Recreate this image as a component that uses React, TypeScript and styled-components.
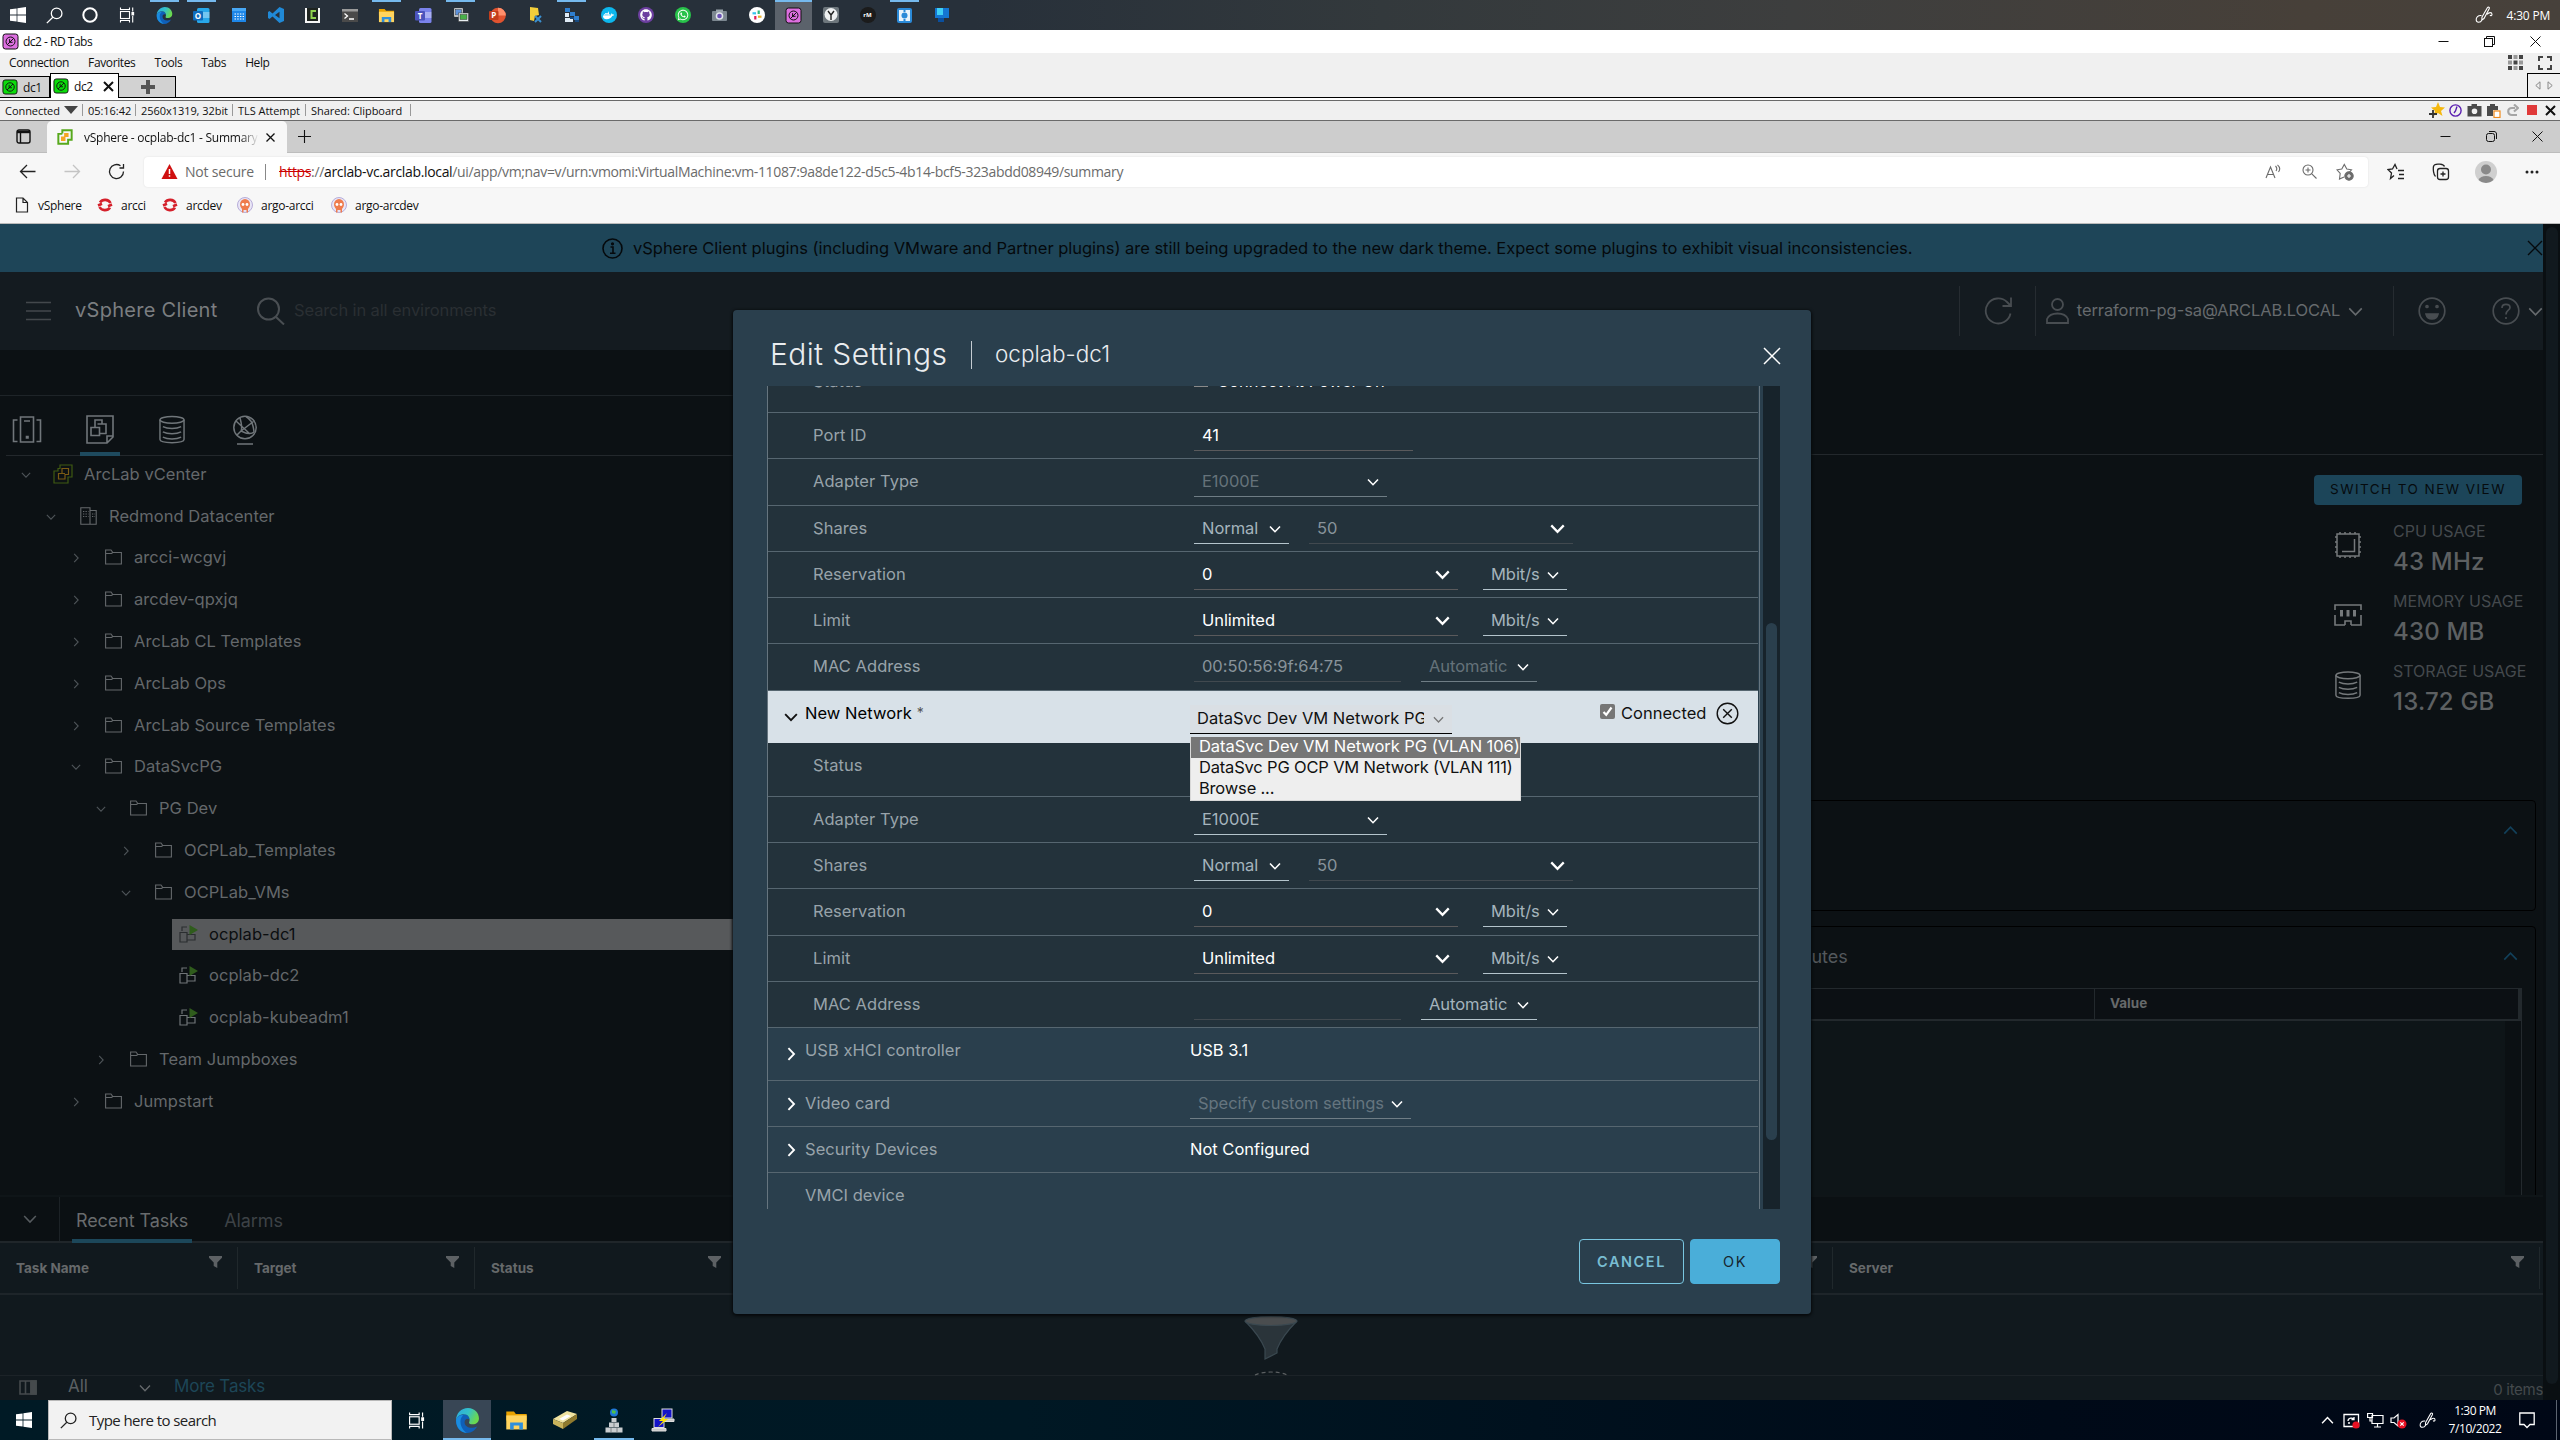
import React from 'react';
import styled, { createGlobalStyle } from 'styled-components';
import { FaGithub, FaWhatsapp, FaDocker } from 'react-icons/fa';

const clarity = `Inter, "Open Sans", sans-serif`;
const segoe = `"Open Sans", "Noto Sans", sans-serif`;

const GlobalStyle = createGlobalStyle`
  * { box-sizing: border-box; }
  body { margin: 0; background: #0c1114; overflow: hidden; }
  svg { display: block; flex: none; }
`;

/* ------------------------------------------------------------------ shared */

const Screen = styled.div`
  width: 2560px;
  height: 1440px;
  display: flex;
  flex-direction: column;
  overflow: hidden;
  font-family: ${segoe};
  font-size: 12px;
  color: #111;
  white-space: nowrap;
`;

const Spacer = styled.div`
  flex: 1;
`;

const Slot = styled.div<{ $w: number }>`
  width: ${p => p.$w}px;
  flex: none;
  height: 100%;
  display: flex;
  align-items: center;
  justify-content: center;
`;

type GlyphProps = {
  w?: number;
  h?: number;
  box?: string;
  stroke?: string;
  sw?: number;
  fill?: string;
  children?: React.ReactNode;
};

const Glyph = ({ w = 16, h, box, stroke = 'currentColor', sw = 1.2, fill = 'none', children }: GlyphProps) => (
  <svg width={w} height={h ?? w} viewBox={box ?? `0 0 ${w} ${h ?? w}`} fill={fill} stroke={stroke} strokeWidth={sw}>
    {children}
  </svg>
);

const Chevron = ({ dir = 'down', size = 12, sw = 1.6 }: { dir?: 'down' | 'right' | 'up'; size?: number; sw?: number }) => (
  <Glyph w={size} box="0 0 12 12" sw={sw}>
    <path d={dir === 'down' ? 'M1 3.5 6 8.7 11 3.5' : dir === 'up' ? 'M1 8.5 6 3.3 11 8.5' : 'M3.8 1 8.6 6 3.8 11'} />
  </Glyph>
);

const WindowsLogo = ({ size }: { size: number }) => (
  <Glyph w={size} box="0 0 16 16" stroke="none" fill="#fff">
    <path d="M0 2.3 6.6 1.4V7.6H0ZM7.4 1.3 16 0V7.6H7.4ZM0 8.4H6.6V14.6L0 13.7ZM7.4 8.4H16V16L7.4 14.7Z" />
  </Glyph>
);

const Lens = ({ size, color }: { size: number; color: string }) => (
  <Glyph w={size} box="0 0 16 16" stroke={color} sw={1.2}>
    <circle cx="10" cy="6" r="5" />
    <path d="M6.4 9.6 .8 15.2" />
  </Glyph>
);

const TaskView = ({ size }: { size: number }) => (
  <Glyph w={size} box="0 0 16 16" stroke="#fff" sw={1.1}>
    <rect x="1.5" y="4.5" width="9" height="7" />
    <path d="M1.5 .5V2.5H10.5V.5M1.5 15.5V13.5H10.5V15.5M13.7 .5V4.5M13.7 9V15.5" />
    <rect x="13" y="5.5" width="1.6" height="2.4" fill="#fff" />
  </Glyph>
);

const EdgeLogo = ({ size }: { size: number }) => (
  <Glyph w={size} box="0 0 24 24" stroke="none">
    <defs>
      <linearGradient id="edgeTop" x1="0" y1="0" x2="1" y2="0.4">
        <stop offset="0" stopColor="#2aa9e0" />
        <stop offset="0.55" stopColor="#35c1c8" />
        <stop offset="1" stopColor="#6ad94f" />
      </linearGradient>
    </defs>
    <path fill="#0f5fb8" d="M1 12c0-3 3-6 7-6 3.500 0 6 2 6 5-2-1.600-4.800-.4-4.800 2.600 0 4.400 5.800 7.200 12 4.200C19 22 15.500 24 12 24 5.800 24 1 19 1 12Z" />
    <path fill="#1a8ce0" d="M1 12C1.400 8.500 5 6.500 8 7 5.500 9 4.800 12 5.500 15.500 6.400 20 10 23.600 12 24 5.800 24 1 19 1 12Z" />
    <path fill="url(#edgeTop)" d="M1 12C1 5 6 0 12.500 0 19 0 23 5 23 10c0 3.500-2.800 5.600-6 5.600-2.600 0-4-1-3.400-2C15 11 13.500 6 8.500 6 4.500 6 1.400 8.500 1 12Z" />
  </Glyph>
);

const FolderLogo = ({ size }: { size: number }) => (
  <Glyph w={size} box="0 0 18 18" stroke="none">
    <path fill="#e8a200" d="M1 2H7L8.500 4H17V9H1Z" />
    <path fill="#ffd45e" d="M1 5H17V16H1Z" />
    <path fill="#2f8fdc" d="M4 16V10.500H14V16H11.200V13H6.800V16Z" />
  </Glyph>
);

const PenIcon = ({ size }: { size: number }) => (
  <Glyph w={size} box="0 0 18 18" stroke="#fff" sw={1.1}>
    <path d="M7 11 12.500 1.500C13.300 .6 14.800 1.400 14.300 2.600L9 12.500 6.800 14ZM6.500 9.500C3 9 1 11.500 1.200 14 1.500 17 5.500 17 7 14M12 8.500C14 6 17 6 17 8.500 17 9.800 15.500 10 15 9" />
  </Glyph>
);

/* ------------------------------------------------------- host task bar (top) */

const HostBar = styled.header`
  height: 30px;
  flex: none;
  display: flex;
  align-items: center;
  color: #fff;
  background: linear-gradient(90deg, #27303a 0%, #27303a 38%, #33393c 54%, #3d3e3e 70%, #474039 90%, #47413b 100%);
`;

const AppSlot = styled.div<{ $running?: boolean; $active?: boolean }>`
  width: 37px;
  height: 30px;
  flex: none;
  display: flex;
  align-items: center;
  justify-content: center;
  border-top: 2px solid transparent;
  border-bottom: 2px solid transparent;
  ${p => p.$running && `border-image: linear-gradient(90deg, transparent 4px, #76b9ed 4px, #76b9ed 33px, transparent 33px) 2 0 0 0;`}
  ${p => p.$active && `border-image: linear-gradient(#76b9ed, #76b9ed) 2 0 0 0; background: #5b626b;`}
`;

const HostClock = styled.div`
  width: 60px;
  padding-right: 10px;
  text-align: right;
  font-size: 12px;
  letter-spacing: -0.2px;
`;

const RoundApp = styled.div<{ $bg: string }>`
  width: 16px;
  height: 16px;
  border-radius: 50%;
  background: ${p => p.$bg};
  color: #fff;
  display: flex;
  align-items: center;
  justify-content: center;
  font-size: 6px;
  font-weight: 700;
`;

const OfficeTile = ({ letter, a, b }: { letter: string; a: string; b: string }) => (
  <Glyph w={17} box="0 0 17 17" stroke="none">
    <rect x="4" y="1" width="12.500" height="15" rx="1.500" fill={a} />
    <rect x="10" y="5" width="6.500" height="6" fill="#fff" opacity=".35" />
    <rect x="0" y="4" width="10" height="9.500" rx="1" fill={b} />
    <text x="5" y="11.600" fontSize="8" fontWeight="700" textAnchor="middle" fill="#fff" fontFamily="Open Sans">{letter}</text>
  </Glyph>
);

const RdIcon = ({ color, size = 17 }: { color: string; size?: number }) => (
  <Glyph w={size} box="0 0 17 17" stroke="#111" sw={1}>
    <rect x="1" y="1" width="15" height="15" rx="2.500" fill={color} />
    <circle cx="8.500" cy="8.500" r="4.500" />
    <path d="M5.300 11.700 11.700 5.300M7.600 6.200V9.300H10.600" />
  </Glyph>
);

const hostApps: { icon: React.ReactNode; running?: boolean; active?: boolean }[] = [
  { icon: <EdgeLogo size={17} />, running: true },
  { icon: <OfficeTile letter="O" a="#28a8ea" b="#0f6cbd" />, running: true },
  {
    icon: (
      <Glyph w={16} stroke="none">
        <rect x="1" y="1" width="14" height="14" fill="#1d86e8" />
        <rect x="1" y="1" width="14" height="3" fill="#48a8f5" />
        <path stroke="#fff" strokeWidth="1.200" strokeDasharray="1.500 1.200" d="M3.500 7H13M3.500 9.500H13M3.500 12H13" />
      </Glyph>
    ),
  },
  {
    icon: (
      <Glyph w={16} stroke="none">
        <path fill="#2089d6" d="M11.500 0 16 2V14L11.500 16 4.500 9.500 1.500 12 0 11V5L1.500 4 4.500 6.500ZM11.500 4.800 7 8 11.500 11.200Z" />
      </Glyph>
    ),
  },
  {
    icon: (
      <Glyph w={17} stroke="none">
        <rect x="1" y="1" width="15" height="15" fill="#f5f5f5" />
        <rect x="3" y="1" width="11" height="13" fill="#1e2420" />
        <path stroke="#8ed14f" strokeWidth="2" fill="none" d="M12 4H7.500V11H12" />
      </Glyph>
    ),
  },
  {
    icon: (
      <Glyph w={16} stroke="none">
        <rect x="0" y="2" width="16" height="13" fill="#4a4a4a" />
        <rect x="0" y="2" width="16" height="2.500" fill="#9a9a9a" />
        <path stroke="#fff" fill="none" strokeWidth="1.300" d="M2.500 6.500 5.500 9 2.500 11.500M7 12H12" />
      </Glyph>
    ),
  },
  { icon: <FolderLogo size={17} />, running: true },
  { icon: <OfficeTile letter="T" a="#7b83eb" b="#4b53bc" /> },
  {
    icon: (
      <Glyph w={16} stroke="#333" sw={0.5}>
        <rect x="1" y="1" width="9" height="9" fill="#e8eef2" />
        <rect x="2.500" y="2.500" width="6" height="5.500" fill="#5f93dc" />
        <rect x="5.500" y="6" width="10" height="8.500" fill="#e8eef2" />
        <rect x="7" y="7.500" width="7" height="5" fill="#49b04a" />
      </Glyph>
    ),
    running: true,
  },
  {
    icon: (
      <Glyph w={17} stroke="none">
        <circle cx="9" cy="8.500" r="7.800" fill="#e0532f" />
        <path d="M9 .7A7.800 7.800 0 0 1 16.800 8.500H9Z" fill="#ff8f6b" />
        <rect x="0" y="4" width="9.500" height="9" rx="1" fill="#c33e1c" />
        <text x="4.800" y="11.400" fontSize="8" fontWeight="700" textAnchor="middle" fill="#fff" fontFamily="Open Sans">P</text>
      </Glyph>
    ),
  },
  {
    icon: (
      <Glyph w={16} stroke="none">
        <path fill="#f4cf3a" d="M3 0 11 1 12 8 8 9 7 14 3 13Z" />
        <path stroke="#3b8fd0" strokeWidth="2" d="M8 9 14 15M14 9 8 15" />
      </Glyph>
    ),
  },
  {
    icon: (
      <Glyph w={16} stroke="none">
        <path fill="#2f7fd0" d="M1 1H6V5H1ZM6 5H11V9H6ZM10 9H15V13H10Z" />
        <path fill="#dfeaf5" d="M1 6H5V10H1ZM1 11H9V15H1Z" />
        <path fill="#184a80" d="M6 10H10V12H6ZM11 13H15V15H11Z" />
      </Glyph>
    ),
    running: true,
  },
  { icon: <RoundApp $bg="#0db7ed"><FaDocker size={11} /></RoundApp> },
  { icon: <RoundApp $bg="#6d3fa0"><FaGithub size={12} /></RoundApp> },
  { icon: <RoundApp $bg="#28c24a"><FaWhatsapp size={12} /></RoundApp> },
  {
    icon: (
      <Glyph w={17} stroke="none">
        <rect x="1" y="4" width="15" height="10" rx="1" fill="#7c8790" />
        <rect x="5" y="2.500" width="7" height="3" fill="#9ba5ad" />
        <circle cx="8.500" cy="9" r="3.800" fill="#dfe4ea" />
        <circle cx="8.500" cy="9" r="2.300" fill="#6a4fb5" />
      </Glyph>
    ),
  },
  {
    icon: (
      <Glyph w={16} sw={2.2}>
        <circle cx="8" cy="8" r="8" fill="#fff" stroke="none" />
        <path stroke="#36c5f0" d="M3.500 6.300H7" />
        <path stroke="#2eb67d" d="M9.700 3.500V7" />
        <path stroke="#ecb22e" d="M9 9.700H12.500" />
        <path stroke="#e01e5a" d="M6.300 9V12.500" />
      </Glyph>
    ),
  },
  { icon: <RdIcon color="#dd6fe0" />, active: true },
  {
    icon: (
      <Glyph w={16} stroke="none">
        <rect x="0" y="0" width="16" height="16" rx="2" fill="#6d767c" />
        <circle cx="8" cy="7.500" r="6.500" fill="#eef0f1" />
        <path stroke="#222" strokeWidth="1.400" d="M8 8 5 4M8 8 11 4M8 8V13" />
      </Glyph>
    ),
  },
  { icon: <RoundApp $bg="#1b1b1b">rM</RoundApp> },
  {
    icon: (
      <Glyph w={17} stroke="none">
        <rect x="1" y="1" width="15" height="15" rx="2" fill="#2b8ad8" />
        <rect x="3" y="3" width="11" height="11" fill="#e9f3fb" />
        <circle cx="8.500" cy="8.500" r="3" fill="#2b8ad8" />
        <path d="M7.500 2.500H9.500V5H7.500ZM7.500 12H9.500V14.500H7.500Z" fill="#2b8ad8" />
      </Glyph>
    ),
    running: true,
  },
  {
    icon: (
      <Glyph w={16} stroke="none">
        <path fill="#1476d2" d="M1 1H15V11H1Z" />
        <path fill="#3fd0f5" d="M3 1H9V8H3Z" />
        <path fill="#0a4f9e" d="M4 11H10V15H4Z" />
      </Glyph>
    ),
  },
];

const HostTaskbar = () => (
  <HostBar>
    <Slot $w={36}><WindowsLogo size={16} /></Slot>
    <Slot $w={37}><Lens size={17} color="#fff" /></Slot>
    <Slot $w={34}><Glyph w={16} stroke="#fff" sw={2}><circle cx="8" cy="8" r="6.700" /></Glyph></Slot>
    <Slot $w={39}><TaskView size={16} /></Slot>
    {hostApps.map((app, i) => (
      <AppSlot key={i} $running={app.running} $active={app.active}>{app.icon}</AppSlot>
    ))}
    <Spacer />
    <PenIcon size={18} />
    <Slot $w={7} />
    <HostClock>4:30 PM</HostClock>
  </HostBar>
);

/* ---------------------------------------------------------- RD Tabs window */

const TitleBar = styled.div`
  height: 23px;
  flex: none;
  display: flex;
  align-items: center;
  gap: 4px;
  padding-left: 2px;
  background: #fff;
  letter-spacing: -0.5px;
`;

const WinButtons = styled.div<{ $h: number }>`
  height: ${p => p.$h}px;
  display: flex;
  align-items: center;
  color: #111;
`;

const WindowControls = ({ round, h, tail }: { round?: boolean; h: number; tail: number }) => (
  <WinButtons $h={h}>
    <Slot $w={46}><Glyph w={11} sw={1}><path d="M.5 5.500H10.500" /></Glyph></Slot>
    <Slot $w={46}>
      <Glyph w={11} sw={1}>
        <rect x=".5" y="2.500" width="8" height="8" rx={round ? 2 : 0} />
        <path d={round ? 'M3 .5H8C9.500 .5 10.500 1.500 10.500 3V8' : 'M2.500 2.500V.5H10.500V8.500H8.500'} />
      </Glyph>
    </Slot>
    <Slot $w={46}><Glyph w={11} sw={1}><path d="M.5 .5 10.500 10.500M10.500 .5 .5 10.500" /></Glyph></Slot>
    <Slot $w={tail} />
  </WinButtons>
);

const MenuBar = styled.div`
  height: 20px;
  flex: none;
  display: flex;
  align-items: center;
  gap: 19px;
  padding: 0 0 1px 9px;
  background: #f0f0f0;
  letter-spacing: -0.38px;
`;

const TabRow = styled.div`
  height: 25px;
  flex: none;
  display: flex;
  align-items: flex-end;
  background: #f0f0f0;
  border-bottom: 1px solid #000;
`;

const RdTab = styled.div<{ $w: number; $active?: boolean }>`
  width: ${p => p.$w}px;
  height: ${p => (p.$active ? 25 : 21)}px;
  margin-bottom: ${p => (p.$active ? -1 : 0)}px;
  padding: 0 ${p => (p.$active ? 4 : 0)}px 0 2px;
  display: flex;
  align-items: center;
  gap: 5px;
  border: 1px solid #000;
  border-bottom: none;
  border-left-width: ${p => (p.$active ? 1 : 0)}px;
  background: ${p => (p.$active ? '#fff' : '#d2d2d2')};
  letter-spacing: -0.4px;
`;

const NewRdTab = styled(RdTab)`
  justify-content: center;
`;

const TabScroll = styled.div`
  width: 33px;
  height: 24px;
  border: 1px solid #000;
  border-width: 1px 0 0 1px;
  display: flex;
  align-items: center;
  justify-content: space-evenly;
  color: #888;
`;

const StatusBar = styled.div`
  height: 23px;
  flex: none;
  display: flex;
  align-items: center;
  padding: 0 0 0 5px;
  border-top: 2px solid #fff;
  border-bottom: 1px solid #6a6a6a;
  background: linear-gradient(#6a6a6a 1px, #f0f0f0 1px);
  font-size: 11px;
  letter-spacing: -0.05px;
`;

const StatusItem = styled.div<{ $w: number }>`
  width: ${p => p.$w}px;
  height: 12px;
  margin-right: 5px;
  border-right: 1px solid #999;
  display: flex;
  align-items: center;
  gap: 4px;
`;

const RdTabsChrome = () => (
  <>
    <TitleBar>
      <RdIcon color="#dd6fe0" />
      dc2 - RD Tabs
      <Spacer />
      <WindowControls h={23} tail={2} />
    </TitleBar>
    <MenuBar>
      <span>Connection</span><span>Favorites</span><span>Tools</span><span>Tabs</span><span>Help</span>
      <Spacer />
      <Slot $w={15}>
        <Glyph w={15} stroke="none">
          <path fill="#444" d="M0 0H4V4H0ZM11 0H15V4H11ZM5.500 5.500H9.500V9.500H5.500ZM0 11H4V15H0ZM11 11H15V15H11Z" />
          <path fill="#999" d="M5.500 0H9.500V4H5.500ZM0 5.500H4V9.500H0ZM11 5.500H15V9.500H11ZM5.500 11H9.500V15H5.500Z" />
        </Glyph>
      </Slot>
      <Slot $w={18}>
        <Glyph w={14} stroke="#444" sw={2}><path d="M1 5V1H5M9 1H13V5M13 9V13H9M5 13H1V9" /></Glyph>
        <Slot $w={12} />
      </Slot>
    </MenuBar>
    <TabRow>
      <RdTab $w={50}><RdIcon color="#0bdc0b" size={16} />dc1</RdTab>
      <RdTab $w={69} $active>
        <RdIcon color="#0bdc0b" size={16} />dc2
        <Spacer />
        <Glyph w={11} stroke="#111" sw={2}><path d="M1 1 10 10M10 1 1 10" /></Glyph>
      </RdTab>
      <NewRdTab $w={57}><Glyph w={14} stroke="#555" sw={4}><path d="M7 0V14M0 7H14" /></Glyph></NewRdTab>
      <Spacer />
      <TabScroll>
        <Glyph w={6} h={9} sw={1}><path d="M5 .8V8.200L.8 4.500Z" /></Glyph>
        <Glyph w={6} h={9} sw={1}><path d="M1 .8V8.200L5.200 4.500Z" /></Glyph>
      </TabScroll>
    </TabRow>
    <StatusBar>
      <StatusItem $w={78}>Connected<Glyph w={14} h={8} stroke="none" fill="#444"><path d="M0 0H14L7 8Z" /></Glyph></StatusItem>
      <StatusItem $w={48}>05:16:42</StatusItem>
      <StatusItem $w={92}>2560x1319, 32bit</StatusItem>
      <StatusItem $w={68}>TLS Attempt</StatusItem>
      <StatusItem $w={100}>Shared: Clipboard</StatusItem>
      <Spacer />
      <Slot $w={19}>
        <Glyph w={16} stroke="none">
          <path fill="#f5b80e" d="M9 0 11 5 16 5.500 12 9 13.500 14 9 11 4.500 14 6 9 2 5.500 7 5Z" />
          <path stroke="#333" strokeWidth="1.800" d="M4 8V16M0 12H8" />
        </Glyph>
      </Slot>
      <Slot $w={19}><Glyph w={13} stroke="#5a1fb0" sw={1.4}><circle cx="6.500" cy="6.500" r="5.600" /><path d="M8 2.500 6.500 7 5 9" /></Glyph></Slot>
      <Slot $w={19}><Glyph w={15} stroke="none" fill="#4a4a4a"><path fillRule="evenodd" d="M4.500 3V1H10V3H14.500V13.500H.5V3ZM7.500 5.500A2.800 2.800 0 1 0 7.500 11.100 2.800 2.800 0 0 0 7.500 5.500Z" /></Glyph></Slot>
      <Slot $w={19}><Glyph w={15} stroke="none"><path fill="#4a4a4a" d="M1 3H4V1H9V3H12V7H7V13H1Z" /><rect x="8" y="8" width="6" height="6.500" fill="#fff" stroke="#f08a1c" strokeWidth="1.200" /></Glyph></Slot>
      <Slot $w={19}><Glyph w={13} stroke="#a5a5a5" sw={3}><path d="M11 11H6C1 11 1 4 6 4H9M8 .5 12 4 8 7.500" strokeWidth="2.200" /></Glyph></Slot>
      <Slot $w={19}><Glyph w={10} stroke="none" fill="#e03a3a"><rect width="10" height="10" /></Glyph></Slot>
      <Slot $w={19}><Glyph w={11} stroke="#111" sw={2}><path d="M1 1 10 10M10 1 1 10" /></Glyph></Slot>
    </StatusBar>
  </>
);

/* ---------------------------------------------------------- Edge browser */

const EdgeTabs = styled.div`
  height: 32px;
  flex: none;
  display: flex;
  align-items: flex-end;
  background: #cdcdcd;
  border-bottom: 1px solid #bdbdbd;
`;

const EdgeTab = styled.div`
  width: 240px;
  height: 32px;
  margin-bottom: -1px;
  padding: 0 12px 0 10px;
  display: flex;
  align-items: center;
  border-radius: 5px 5px 0 0;
  background: #f7f7f7;
  letter-spacing: -0.24px;
`;

const EdgeTabTitle = styled.div`
  width: 182px;
  flex: none;
  margin-left: 11px;
  overflow: hidden;
  mask-image: linear-gradient(90deg, #000 86%, transparent 96%);
`;

const AddressBar = styled.div`
  height: 37px;
  flex: none;
  display: flex;
  align-items: center;
  background: #f7f7f7;
  color: #222;
`;

const Omnibox = styled.div`
  width: 2224px;
  height: 30px;
  display: flex;
  align-items: center;
  border-radius: 4px;
  background: #fff;
  box-shadow: 0 0 2px #ddd;
  font-size: 14px;
  color: #6b6b6b;
  letter-spacing: -0.34px;
`;

const NotSecure = styled.div`
  width: 81px;
  margin-right: 13px;
  border-right: 1px solid #888;
  line-height: 16px;
  letter-spacing: -0.2px;
`;

const Strike = styled.span`
  color: #c00;
  text-decoration: line-through;
`;

const HostName = styled.span`
  color: #111;
`;

const Bookmarks = styled.div`
  height: 34px;
  flex: none;
  display: flex;
  align-items: flex-start;
  padding: 6px 0 0 14px;
  background: #f7f7f7;
  border-bottom: 1px solid #bbb;
  letter-spacing: -0.28px;
`;

const Bookmark = styled.div<{ $w: number }>`
  width: ${p => p.$w}px;
  height: 18px;
  display: flex;
  align-items: center;
  gap: 8px;
`;

const OpenShift = () => (
  <Glyph w={16} stroke="#d5202b" sw={2.6}><path d="M13.500 6A6 5.600 0 0 0 3 5.500M2.500 10A6 5.600 0 0 0 13 10.500M1 8.500 5 6.800M15 7.500 11 9.200" /></Glyph>
);

const Argo = () => (
  <Glyph w={16} stroke="none">
    <circle cx="8" cy="8" r="7.500" fill="#e9e6f6" stroke="#a79bd0" strokeWidth=".8" />
    <path fill="#ef7b4d" d="M3 7.500A5 5.500 0 0 1 13 7.500C13 10 11.500 11 11 12V15.500H9.500V13H6.500V15.500H5V12C4.500 11 3 10 3 7.500Z" />
    <circle cx="6" cy="7.500" r="1.400" fill="#fff" /><circle cx="10" cy="7.500" r="1.400" fill="#fff" />
  </Glyph>
);

const VcLogo = ({ size, green, orange }: { size: number; green: string; orange: string }) => (
  <Glyph w={size} box="0 0 18 18" stroke={green} sw={2.2}>
    <path d="M6 5V1.500H16.500V12H12.500V16.500H1.500V5.500H6" />
    <path stroke="none" fill={orange} d="M8 4.500H13V9H8ZM4.500 8.500H9.500V13.500H4.500Z" />
  </Glyph>
);

const EdgeChrome = () => (
  <>
    <EdgeTabs>
      <Slot $w={47}><Glyph w={15} stroke="#111" sw={1.4}><rect x="1" y="1" width="13" height="13" rx="2" /><path strokeWidth="2.400" d="M1 3H14" /><path d="M4.500 3V14" /></Glyph></Slot>
      <EdgeTab>
        <VcLogo size={16} green="#57a91d" orange="#f5a623" />
        <EdgeTabTitle>vSphere - ocplab-dc1 - Summary</EdgeTabTitle>
        <Glyph w={9} stroke="#111" sw={1.3}><path d="M.5 .5 8.500 8.500M8.500 .5 .5 8.500" /></Glyph>
      </EdgeTab>
      <Slot $w={35}><Glyph w={13} stroke="#111" sw={1.1}><path d="M6.500 0V13M0 6.500H13" /></Glyph></Slot>
      <Spacer />
      <WindowControls h={32} round tail={0} />
    </EdgeTabs>
    <AddressBar>
      <Slot $w={50}><Slot $w={4} /><Glyph w={17} sw={1.3}><path d="M16.500 8.500H1.500M8 2 1.500 8.500 8 15" /></Glyph></Slot>
      <Slot $w={44}><Glyph w={17} stroke="#c4c4c4" sw={1.3}><path d="M.5 8.500H15.500M9 2 15.500 8.500 9 15" /></Glyph></Slot>
      <Slot $w={50}><Glyph w={17} sw={1.3}><path d="M15.500 8.500A7 7 0 1 1 12.500 2.800M15.500 1V5H11.500" /></Glyph><Slot $w={6} /></Slot>
      <Omnibox>
        <Slot $w={41}><Slot $w={9} /><Glyph w={17} stroke="none"><path fill="#cf1010" d="M8.500 1 16.500 16H.5Z" /><path stroke="#fff" strokeWidth="1.500" d="M8.500 6V11M8.500 12.300V13.800" /></Glyph></Slot>
        <NotSecure>Not secure</NotSecure>
        <span><Strike>https</Strike>://<HostName>arclab-vc.arclab.local</HostName>/ui/app/vm;nav=v/urn:vmomi:VirtualMachine:vm-11087:9a8de122-d5c5-4b14-bcf5-323abdd08949/summary</span>
        <Spacer />
        <Slot $w={36}><Glyph w={16} sw={1.1}><path d="M1 14 5.500 3 10 14M2.500 10.500H8.500M10.500 2C12 3.500 12 5.500 11 7M12.500 .8C15 3 15 6 13.500 8" /></Glyph></Slot>
        <Slot $w={36}><Glyph w={15} sw={1.1}><circle cx="6" cy="6" r="5" /><path d="M9.800 9.800 14.500 14.500M6 3.500V8.500M3.500 6H8.500" /></Glyph></Slot>
        <Slot $w={36}><Glyph w={18} sw={1.1}><path d="M8 14 3.500 16 4.200 10.500 1 6.800 5.800 6 8.300 1.500 10.800 6 15.500 6.800 13.500 9" /><circle cx="13" cy="13" r="4.200" fill="#6b6b6b" /><path stroke="#fff" d="M13 11V15M11 13H15" /></Glyph></Slot>
        <Slot $w={5} />
      </Omnibox>
      <Slot $w={6} />
      <Slot $w={44}><Glyph w={18} sw={1.3}><path d="M7 12.500 3.500 15.500 4.500 10 1 6.500 5.500 6 8 1.500 10 6M11 7.500H17M12 11.500H17M11 15.500H17" /></Glyph></Slot>
      <Slot $w={45}><Glyph w={18} sw={1.3}><rect x="5.500" y="5.500" width="11" height="11" rx="2.500" /><path d="M11 8.500V13.500M8.500 11H13.500M3.500 13.500C1.500 12 1 6 1.500 3.500 2 1 5 .8 8 1.200 10.500 1.500 12 2 12.500 3.500" /></Glyph></Slot>
      <Slot $w={46}>
        <Glyph w={22} stroke="none"><circle cx="11" cy="11" r="11" fill="#cfcfcf" /><circle cx="11" cy="8.500" r="5" fill="#8a8a8a" /><path d="M3.500 19A8 6 0 0 1 18.500 19 11 11 0 0 1 3.500 19Z" fill="#8a8a8a" /></Glyph>
      </Slot>
      <Slot $w={46}><Glyph w={14} h={4} stroke="none" fill="#222"><circle cx="2" cy="2" r="1.500" /><circle cx="7" cy="2" r="1.500" /><circle cx="12" cy="2" r="1.500" /></Glyph></Slot>
    </AddressBar>
    <Bookmarks>
      <Bookmark $w={83}><Glyph w={16} stroke="#222" sw={1.2}><path d="M2.500 1H9L13.500 5.500V15H2.500ZM9 1V5.500H13.500" /></Glyph>vSphere</Bookmark>
      <Bookmark $w={65}><OpenShift />arcci</Bookmark>
      <Bookmark $w={75}><OpenShift />arcdev</Bookmark>
      <Bookmark $w={94}><Argo />argo-arcci</Bookmark>
      <Bookmark $w={94}><Argo />argo-arcdev</Bookmark>
    </Bookmarks>
  </>
);

/* ---------------------------------------------------------- vSphere client */

const Viewport = styled.div`
  position: relative;
  height: 1176px;
  flex: none;
  display: flex;
  background: #0c1114;
  font-family: ${clarity};
  font-size: 16.5px;
  color: #666a6d;
`;

const Client = styled.div`
  width: 2543px;
  height: 1176px;
  display: flex;
  flex-direction: column;
  overflow: hidden;
`;

const PageScroll = styled.div`
  width: 17px;
  padding: 3px 2px 16px 3px;
  background: #0a0f12;
  &::before {
    content: '';
    display: block;
    height: 100%;
    border-radius: 6px;
    background: #11191e;
  }
`;

const Banner = styled.div`
  height: 48px;
  flex: none;
  display: flex;
  align-items: center;
  background: #1e4558;
  color: #05090c;
`;

const BannerText = styled.div`
  width: 1898px;
  margin-left: 10px;
  padding-bottom: 1px;
  letter-spacing: -0.025px;
`;

const AppHeader = styled.div`
  height: 78px;
  flex: none;
  display: flex;
  align-items: center;
  padding-left: 26px;
  background: #141b20;
`;

const Product = styled.div`
  width: 182px;
  flex: none;
  padding: 0 0 2px 24px;
  font-size: 20px;
  letter-spacing: 0.28px;
  color: #7b7e80;
`;

const SearchHint = styled.div`
  padding: 0 0 2px 9px;
  letter-spacing: -0.12px;
  color: #2a2f33;
`;

const HeaderCell = styled.div<{ $w: number; $rule?: boolean; $pr?: number; $gap?: number }>`
  width: ${p => p.$w}px;
  height: 50px;
  padding-right: ${p => p.$pr ?? 0}px;
  display: flex;
  align-items: center;
  justify-content: center;
  gap: ${p => p.$gap ?? 8}px;
  border-left: ${p => (p.$rule ? '1px solid #262c31' : 'none')};
`;

const UserName = styled.div`
  padding-bottom: 2px;
  letter-spacing: -0.1px;
`;

const Work = styled.div`
  height: 845px;
  flex: none;
  display: flex;
`;

const Navigator = styled.div`
  width: 748px;
  flex: none;
  display: flex;
  flex-direction: column;
`;

const NavTop = styled.div`
  height: 46px;
  flex: none;
  border-bottom: 1px solid #1e2428;
`;

const NavTabs = styled.div`
  height: 60px;
  flex: none;
  display: flex;
  margin-left: 6px;
  padding-left: 1px;
  border-bottom: 1px solid #23282c;
`;

const NavTab = styled.div<{ $active?: boolean }>`
  width: 40px;
  height: 60px;
  margin-right: 32.5px;
  padding-top: 11px;
  display: flex;
  align-items: center;
  justify-content: center;
  border-bottom: 4px solid ${p => (p.$active ? '#1e4a5e' : 'transparent')};
  color: #70767a;
`;

const Tree = styled.div`
  margin-top: -2px;
`;

const TreeRow = styled.div<{ $depth: number }>`
  height: 41.8px;
  display: flex;
  align-items: center;
  padding-left: ${p => 16 + p.$depth * 25}px;
`;

const Caret = styled.div`
  width: 20px;
  display: flex;
  justify-content: center;
  color: #4f5559;
`;

const Node = styled.div<{ $selected?: boolean }>`
  flex: 1;
  height: 31px;
  margin-left: 11px;
  padding: 0 0 2px 6px;
  display: flex;
  align-items: center;
  gap: 11px;
  letter-spacing: 0.05px;
  background: ${p => (p.$selected ? '#57595b' : 'none')};
  color: ${p => (p.$selected ? '#0b0e10' : '#64686b')};
`;

const NodeIcon = styled.div`
  width: 20px;
  display: flex;
  justify-content: center;
`;

const FolderIcon = () => <Glyph w={17} h={16} sw={1.1}><path d="M.6 15V1H6L7.800 3.500H16.400V15ZM.6 4.500H6.500L7.800 3.500" /></Glyph>;

const VmIcon = ({ color = '#6f7477' }: { color?: string }) => (
  <Glyph w={20} h={18} stroke={color} sw={1.2}>
    <path d="M4 6V2H9M2 7.500H9V17H2ZM9 9.500H17V15H9M9 12V15" />
    <path stroke="none" fill="#2f5c1c" d="M11.500 0 20 5 11.500 10Z" />
  </Glyph>
);

const DatacenterIcon = () => (
  <Glyph w={17} h={18} sw={1.1}>
    <path d="M.8 17.200V.8H10V17.200ZM10 3.500H16.200V17.200H.8" />
    <path strokeDasharray="1.300 1.200" d="M3 4.500H8.500M3 7H8.500M3 9.500H8.500M12 7H15M12 9.500H15" />
  </Glyph>
);

const VcenterNodeIcon = () => (
  <Glyph w={20} sw={1.2} stroke="#3f5a12">
    <path d="M7 4.500V1H19V13H15V19H1V7H5V4.500Z" />
    <path stroke="#7a5a14" d="M9 4.500H15.500V10.500H12V15H5.500V9.500H9ZM9 9.500H12" />
  </Glyph>
);

const tree: { depth: number; label: string; icon: React.ReactNode; open?: boolean; leaf?: boolean; selected?: boolean }[] = [
  { depth: 0, label: 'ArcLab vCenter', icon: <VcenterNodeIcon />, open: true },
  { depth: 1, label: 'Redmond Datacenter', icon: <DatacenterIcon />, open: true },
  { depth: 2, label: 'arcci-wcgvj', icon: <FolderIcon /> },
  { depth: 2, label: 'arcdev-qpxjq', icon: <FolderIcon /> },
  { depth: 2, label: 'ArcLab CL Templates', icon: <FolderIcon /> },
  { depth: 2, label: 'ArcLab Ops', icon: <FolderIcon /> },
  { depth: 2, label: 'ArcLab Source Templates', icon: <FolderIcon /> },
  { depth: 2, label: 'DataSvcPG', icon: <FolderIcon />, open: true },
  { depth: 3, label: 'PG Dev', icon: <FolderIcon />, open: true },
  { depth: 4, label: 'OCPLab_Templates', icon: <FolderIcon /> },
  { depth: 4, label: 'OCPLab_VMs', icon: <FolderIcon />, open: true },
  { depth: 5, label: 'ocplab-dc1', icon: <VmIcon color="#2b2e30" />, leaf: true, selected: true },
  { depth: 5, label: 'ocplab-dc2', icon: <VmIcon />, leaf: true },
  { depth: 5, label: 'ocplab-kubeadm1', icon: <VmIcon />, leaf: true },
  { depth: 3, label: 'Team Jumpboxes', icon: <FolderIcon /> },
  { depth: 2, label: 'Jumpstart', icon: <FolderIcon /> },
];

const Disks = ({ w = 27, h = 29 }: { w?: number; h?: number }) => (
  <Glyph w={w} h={h} box="0 0 27 29" sw={1.5}>
    <path d="M1 4.500V25C1 27 6 28.200 13.500 28.200S26 27 26 25V4.500" />
    <ellipse cx="13.500" cy="4.500" rx="12.500" ry="3.500" />
    <path d="M4 11.500C9 14 18 14 23 11.500M4 17C9 19.500 18 19.500 23 17M4 22.500C9 25 18 25 23 22.500" />
  </Glyph>
);

const Main = styled.div`
  flex: 1;
  display: flex;
  flex-direction: column;
`;

const MainTop = styled.div`
  height: 105px;
  flex: none;
  border-bottom: 1px solid #23282c;
`;

const Usage = styled.div`
  width: 229px;
  height: 345px;
  flex: none;
  align-self: flex-end;
  padding-top: 20px;
`;

const SwitchButton = styled.div`
  width: 208px;
  height: 30px;
  margin-bottom: 7px;
  padding-bottom: 2px;
  display: flex;
  align-items: center;
  justify-content: center;
  border-radius: 4px;
  background: #1c4559;
  color: #060b0e;
  font-size: 13.5px;
  letter-spacing: 1.45px;
`;

const UsageItem = styled.div`
  height: 70px;
  display: grid;
  grid-template-columns: 79px 1fr;
  align-items: center;
`;

const UsageIcon = styled.div`
  padding: 0 0 5px 20px;
  color: #75797b;
`;

const UsageLabel = styled.div`
  height: 30px;
  line-height: 30px;
  font-size: 16px;
  color: #44494d;
`;

const UsageValue = styled.div`
  height: 32px;
  line-height: 31px;
  font-size: 24px;
  font-weight: 500;
  letter-spacing: 0.2px;
  color: #5d6062;
`;

const Portlet = styled.div<{ $h: number }>`
  height: ${p => p.$h}px;
  flex: none;
  margin: 0 7px 15px 300px;
  border: 1px solid #000;
  border-radius: 4px;
`;

const PortletHead = styled.div<{ $pad: number }>`
  height: 61px;
  padding: 0 17px 2px ${p => p.$pad}px;
  display: flex;
  align-items: center;
  justify-content: space-between;
  font-size: 18px;
  color: #53585c;
  svg { color: #12405a; }
`;

const AttrTable = styled.div`
  margin-right: 13px;
  height: 300px;
  border: 1px solid #23292d;
  display: flex;
  flex-direction: column;
  background: linear-gradient(90deg, #0e1518 calc(100% - 16px), #0b1013 calc(100% - 16px));
`;

const AttrHead = styled.div`
  height: 32px;
  flex: none;
  display: grid;
  grid-template-columns: 1fr 424px 3px;
  background: #0c1014;
  border-bottom: 2px solid #23292d;
  font-size: 13.5px;
  font-weight: 700;
  line-height: 29px;
  color: #66696b;
`;

const AttrCell = styled.div`
  padding-left: 15px;
  border-left: 1px solid #23292d;
`;

const AttrEnd = styled.div`
  background: #23292d;
`;

const Tasks = styled.div`
  height: 205px;
  flex: none;
  display: flex;
  flex-direction: column;
  background: #11191e;
`;

const TaskTabs = styled.div`
  height: 48px;
  flex: none;
  display: flex;
  align-items: flex-end;
  background: #0b1013;
  border-top: 2px solid #0f1518;
  border-bottom: 2px solid #20262a;
`;

const TaskTab = styled.div<{ $active?: boolean }>`
  height: 42px;
  margin-bottom: -2px;
  padding: 0 4px;
  margin-right: 28px;
  line-height: 40px;
  font-size: 18px;
  letter-spacing: -0.1px;
  border-bottom: 4px solid ${p => (p.$active ? '#1c475a' : 'transparent')};
  color: ${p => (p.$active ? '#686b6d' : '#3d4246')};
`;

const TaskToggle = styled.div`
  width: 60px;
  height: 44px;
  margin-right: 12px;
  border-right: 1px solid #1c2226;
  display: flex;
  align-items: center;
  justify-content: center;
  color: #565b5f;
`;

const TaskHead = styled.div`
  height: 52px;
  flex: none;
  display: flex;
  padding: 4px 0 4px 0;
  border-bottom: 2px solid #1e252a;
  font-size: 13.5px;
  font-weight: 700;
  color: #66696b;
`;

const TaskCol = styled.div<{ $w: number }>`
  width: ${p => p.$w}px;
  height: 42px;
  padding: 0 15px 0 16px;
  display: flex;
  justify-content: space-between;
  line-height: 42px;
  border-right: 1px solid #20282c;
  svg { margin-top: 9px; }
`;

const TaskBody = styled.div`
  height: 81px;
  flex: none;
  padding: 20px 0 0 1243px;
  border-bottom: 1px solid #1c2328;
`;

const TaskFoot = styled.div`
  flex: 1;
  display: flex;
  align-items: center;
  padding: 0 0 1px 19px;
  font-size: 17px;
`;

const FootLabel = styled.div<{ $w: number; $link?: boolean }>`
  width: ${p => p.$w}px;
  padding-bottom: 3px;
  letter-spacing: ${p => (p.$link ? -0.2 : 0)}px;
  color: ${p => (p.$link ? '#1d4657' : '#5b6063')};
`;

const FootCount = styled.div`
  padding-top: 4px;
  font-size: 15px;
  letter-spacing: -0.3px;
  color: #44494c;
`;

const FilterIcon = () => <Glyph w={13} h={12} stroke="none" fill="#5d6164"><path d="M0 0H13V1.800L8.300 6.500V12L4.700 10V6.500L0 1.800Z" /></Glyph>;

const taskColumns: [string, number][] = [['Task Name', 238], ['Target', 237], ['Status', 262], ['Details', 540], ['Initiator', 556], ['Server', 707]];

const VsphereClient = () => (
  <Client>
    <Banner>
      <Slot $w={602} />
      <Glyph w={21} sw={1.6} stroke="#05090c"><circle cx="10.500" cy="10.500" r="9.500" /><path d="M8.500 9H11V15M8 15.200H13.500" /><circle cx="10.500" cy="5.800" r=".8" fill="#05090c" /></Glyph>
      <BannerText>vSphere Client plugins (including VMware and Partner plugins) are still being upgraded to the new dark theme. Expect some plugins to exhibit visual inconsistencies.</BannerText>
      <Glyph w={16} sw={1.4} stroke="#05090c"><path d="M1 1 15 15M15 1 1 15" /></Glyph>
    </Banner>
    <AppHeader>
      <Glyph w={25} h={20} sw={1.6} stroke="#43484c"><path d="M0 1.500H25M0 10H25M0 18.500H25" /></Glyph>
      <Product>vSphere Client</Product>
      <Slot $w={24} />
      <Glyph w={28} sw={2} stroke="#4a4f53"><circle cx="11.500" cy="12" r="10.500" /><path d="M19 20 27 27.500" /></Glyph>
      <SearchHint>Search in all environments</SearchHint>
      <Spacer />
      <HeaderCell $w={76} $rule>
        <Glyph w={28} sw={1.8} stroke="#484d51"><path d="M26.500 16.500A12.500 12.500 0 1 1 23 5L26 8M27 .5V9H18.500" /></Glyph>
      </HeaderCell>
      <HeaderCell $w={358} $rule $pr={20}>
        <Glyph w={23} h={26} sw={1.8} stroke="#484d51"><circle cx="11.500" cy="6.500" r="5.500" /><path d="M1 25V21C3 16.500 7 15.500 11.500 15.500S20 16.500 22 21V25Z" /></Glyph>
        <UserName>terraform-pg-sa@ARCLAB.LOCAL</UserName>
        <Chevron size={15} sw={1.3} />
      </HeaderCell>
      <HeaderCell $w={76} $rule>
        <Glyph w={28} sw={1.7} stroke="#484d51"><circle cx="14" cy="14" r="12.800" /><path fill="#484d51" d="M8 17H20C19 21 17 22 14 22S9 21 8 17Z" /><circle cx="9" cy="9.500" r="1" /><circle cx="19" cy="9.500" r="1" /></Glyph>
      </HeaderCell>
      <HeaderCell $w={74} $gap={8}>
        <Slot $w={14} />
        <Glyph w={28} sw={1.7} stroke="#484d51"><circle cx="14" cy="14" r="12.800" /><path d="M10 11C10 6 18 6.500 18 10.500 18 13.500 14 13 14 17.500M14 20V22" /></Glyph>
        <Chevron size={15} sw={1.3} />
      </HeaderCell>
    </AppHeader>
    <Work>
      <Navigator>
        <NavTop />
        <NavTabs>
          <NavTab>
            <Glyph w={30} h={27} sw={1.6}><path d="M8.500 1H21.500V26H8.500ZM12 5H18M14.500 20.500H16V22H14.500ZM5.500 4H1.500V25.500H5.500M24.500 4H28.500V25.500H24.500" /></Glyph>
          </NavTab>
          <NavTab $active>
            <Glyph w={28} h={29} sw={1.6}><path d="M1 1H27V22L21 28H1ZM27 21H21V28M9 12V5H16V9M11.500 9H20V18.500H14M5 12.500H13.500V20.500H5Z" /></Glyph>
          </NavTab>
          <NavTab><Disks w={26} /></NavTab>
          <NavTab>
            <Glyph w={24} h={30} sw={1.5}><circle cx="12" cy="12.500" r="11.200" /><path d="M4 29H20M3 6 17 19M20.500 6.500 8 16 4 20M7 3C9 10 9 14 8 16M21 17C19 19 14 19 8 16M13 1.500C17 4 20 7 21 17" /></Glyph>
          </NavTab>
        </NavTabs>
        <Tree>
          {tree.map(n => (
            <TreeRow key={n.label} $depth={n.depth}>
              <Caret>{!n.leaf && <Chevron size={10} dir={n.open ? 'down' : 'right'} sw={1.3} />}</Caret>
              <Node $selected={n.selected}>
                <NodeIcon>{n.icon}</NodeIcon>
                {n.label}
              </Node>
            </TreeRow>
          ))}
        </Tree>
      </Navigator>
      <Main>
        <MainTop />
        <Usage>
          <SwitchButton>SWITCH TO NEW VIEW</SwitchButton>
          <UsageItem>
            <UsageIcon><Glyph w={28} sw={1.5}><rect x="3" y="3" width="22" height="22" /><path d="M20.500 8V20.500H8M6 1V3M11 1V3M16 1V3M21 1V3M6 25V27M11 25V27M16 25V27M21 25V27M1 6H3M1 11H3M1 16H3M1 21H3M25 6H27M25 11H27M25 16H27M25 21H27" /></Glyph></UsageIcon>
            <div><UsageLabel>CPU USAGE</UsageLabel><UsageValue>43 MHz</UsageValue></div>
          </UsageItem>
          <UsageItem>
            <UsageIcon><Glyph w={28} h={22} sw={1.6}><path d="M1 6V1H27V6M1 11V21H11M17 21H27V11M11 21V17H17V21" /><path strokeWidth="3" d="M7.500 6V12.500M14 6V12.500M20.500 6V12.500" /></Glyph></UsageIcon>
            <div><UsageLabel>MEMORY USAGE</UsageLabel><UsageValue>430 MB</UsageValue></div>
          </UsageItem>
          <UsageItem>
            <UsageIcon><Disks w={28} h={28} /></UsageIcon>
            <div><UsageLabel>STORAGE USAGE</UsageLabel><UsageValue>13.72 GB</UsageValue></div>
          </UsageItem>
        </Usage>
        <Portlet $h={111}>
          <PortletHead $pad={700}><span /><Chevron dir="up" size={15} sw={1.3} /></PortletHead>
        </Portlet>
        <Portlet $h={400}>
          <PortletHead $pad={646}><span>Custom Attributes</span><Chevron dir="up" size={15} sw={1.3} /></PortletHead>
          <AttrTable>
            <AttrHead><AttrCell /><AttrCell>Value</AttrCell><AttrEnd /></AttrHead>
          </AttrTable>
        </Portlet>
      </Main>
    </Work>
    <Tasks>
      <TaskTabs>
        <TaskToggle><Chevron size={14} sw={1.3} /></TaskToggle>
        <TaskTab $active>Recent Tasks</TaskTab>
        <TaskTab>Alarms</TaskTab>
      </TaskTabs>
      <TaskHead>
        {taskColumns.map(([name, w]) => (
          <TaskCol key={name} $w={w}>{name}<FilterIcon /></TaskCol>
        ))}
      </TaskHead>
      <TaskBody>
        <Glyph w={56} h={62} sw={1.2} stroke="#3a4850">
          <path fill="#2a343a" d="M2 6C10 14 18 24 22 34V44L34 38V34C38 24 46 14 54 6" />
          <ellipse cx="28" cy="6" rx="26" ry="4.500" fill="#4a4d4f" />
          <path stroke="#5b5f61" strokeDasharray="4 3" d="M12 60C20 56 36 56 44 60" />
        </Glyph>
      </TaskBody>
      <TaskFoot>
        <Glyph w={18} h={15} sw={1.6} stroke="#454a4d"><path d="M1 1H17V14H1ZM6.500 1V14M12 1V14" /><rect x="12" y="1" width="5" height="13" fill="#454a4d" /></Glyph>
        <Slot $w={31} />
        <FootLabel $w={71}>All</FootLabel>
        <Chevron size={12} sw={1.3} />
        <Slot $w={23} />
        <FootLabel $w={100} $link>More Tasks</FootLabel>
        <Spacer />
        <FootCount>0 items</FootCount>
      </TaskFoot>
    </Tasks>
  </Client>
);

/* ---------------------------------------------------------- Edit Settings */

const Modal = styled.section`
  position: absolute;
  left: 733px;
  top: 86px;
  width: 1078px;
  height: 1004px;
  display: flex;
  flex-direction: column;
  border-radius: 4px;
  background: #2a3f4d;
  box-shadow: 0 1px 3px 1px #06090b;
`;

const ModalHead = styled.div`
  height: 76px;
  flex: none;
  display: flex;
  align-items: center;
  padding: 13px 30px 0 37px;
  color: #e9ecef;
`;

const ModalTitle = styled.div`
  width: 202px;
  height: 28px;
  border-right: 1px solid #c5ccd2;
  line-height: 26px;
  font-size: 30px;
  font-weight: 300;
  letter-spacing: 0.4px;
`;

const ModalSub = styled.div`
  margin-left: 23px;
  padding-bottom: 2px;
  font-size: 22.5px;
  font-weight: 300;
`;

const ModalBody = styled.div`
  height: 823px;
  flex: none;
  display: flex;
  margin-left: 34px;
  overflow: hidden;
`;

const SettingsTable = styled.div`
  width: 993px;
  height: 860px;
  margin-top: -27px;
  flex: none;
  border: 1px solid #66757f;
  border-width: 0 1px 0 1px;
  padding-right: 1px;
`;

const ModalScroll = styled.div`
  width: 17px;
  height: 823px;
  margin-left: 3px;
  padding: 237px 3px 69px 3px;
  background: #17232b;
`;

const ModalThumb = styled.div`
  height: 517px;
  border-radius: 6px;
  background: #2a3f4d;
`;

const SettingRow = styled.div<{ $h: number; $tone?: 'sub' | 'light' }>`
  height: ${p => p.$h}px;
  display: grid;
  grid-template-columns: 422px 1fr;
  border-bottom: ${p => (p.$tone === 'light' ? 'none' : '1px solid #566670')};
  background: ${p => (p.$tone === 'sub' ? '#23323b' : p.$tone === 'light' ? '#d8e1e8' : 'none')};
  color: ${p => (p.$tone === 'light' ? '#000' : '#98a3aa')};
`;

const RowLabel = styled.div<{ $sub?: boolean }>`
  height: 45px;
  padding: 0 0 2px ${p => (p.$sub ? 45 : 16)}px;
  display: flex;
  align-items: center;
  letter-spacing: 0.05px;
`;

const RowCaret = styled.div<{ $drop?: number; $dark?: boolean }>`
  width: 15px;
  margin-right: 6px;
  padding-top: ${p => p.$drop ?? 2}px;
  color: ${p => (p.$dark ? '#111' : '#fff')};
`;

const Star = styled.span`
  margin-left: 5px;
  font-size: 14px;
  color: #555;
`;

const RowValue = styled.div<{ $inset?: boolean }>`
  height: 45px;
  padding-left: ${p => (p.$inset ? 4 : 0)}px;
  display: flex;
  align-items: center;
  color: #fff;
`;

const PlainValue = styled.div`
  padding-bottom: 2px;
`;

const Field = styled.div<{ $w: number; $ml?: number; $line: string; $color: string }>`
  width: ${p => p.$w}px;
  height: 31px;
  margin: 7px 0 7px ${p => p.$ml ?? 0}px;
  padding: 0 8px 1px 8px;
  display: flex;
  flex: none;
  align-items: center;
  justify-content: space-between;
  border-bottom: 1px solid ${p => p.$line};
  color: ${p => p.$color};
  letter-spacing: -0.05px;
  svg { color: #fff; margin-top: 2px; }
`;

const bright = '#b4c4cc';
const dim = '#6f7d85';
const faint = '#41494f';
const brown = '#5a5a5c';

const NetworkSelect = styled.div`
  width: 262px;
  height: 29px;
  margin-top: 12px;
  padding: 0 8px 2px 7px;
  display: flex;
  align-items: center;
  gap: 9px;
  border-bottom: 1px solid #000;
  background: #dadfe4;
  color: #111;
  letter-spacing: 0.02px;
  svg { color: #777; margin-top: 2px; }
`;

const Clip = styled.div`
  width: 227px;
  flex: none;
  overflow: hidden;
`;

const Checked = styled.div`
  width: 15px;
  height: 15px;
  margin: 0 6px 5px 148px;
  border-radius: 2px;
  background: #767676;
  display: flex;
  align-items: center;
  justify-content: center;
`;

const EmptyBox = styled.div`
  width: 14px;
  height: 14px;
  margin: 0 9px 3px 0;
  border: 1px solid #8a8a8a;
`;

const ConnectedLabel = styled.div`
  width: 95px;
  padding-bottom: 1px;
  color: #111;
`;

const Dropdown = styled.div`
  position: absolute;
  left: 457px;
  top: 427px;
  width: 331px;
  height: 64px;
  border: 1px solid #d8d8d8;
  border-top: none;
  background: #eeeeee;
  color: #111;
  letter-spacing: -0.12px;
`;

const Option = styled.div<{ $on?: boolean }>`
  height: 21px;
  padding-left: 8px;
  line-height: 19px;
  letter-spacing: ${p => (p.$on ? -0.05 : -0.18)}px;
  background: ${p => (p.$on ? '#767676' : 'none')};
  color: ${p => (p.$on ? '#fff' : '#111')};
`;

const ModalFoot = styled.div`
  flex: 1;
  display: flex;
  justify-content: flex-end;
  gap: 6px;
  padding: 30px 31px 0 0;
`;

const Action = styled.div<{ $w: number; $primary?: boolean }>`
  width: ${p => p.$w}px;
  height: 45px;
  display: flex;
  align-items: center;
  justify-content: center;
  border: 1px solid ${p => (p.$primary ? '#4aaed9' : '#79c6e0')};
  border-radius: 4px;
  background: ${p => (p.$primary ? '#4aaed9' : 'transparent')};
  color: ${p => (p.$primary ? '#17262f' : '#79bdd2')};
  font-size: 14.5px;
  font-weight: ${p => (p.$primary ? 400 : 600)};
  letter-spacing: ${p => (p.$primary ? 1.5 : 1.55)}px;
`;

const MbitSelect = () => (
  <Field $w={84} $ml={25} $line={bright} $color="#a5b4bd">Mbit/s<Chevron sw={1.6} /></Field>
);

const NetworkRows = ({ heights, locked, portRow, mac }: { heights: number[]; locked?: boolean; portRow?: boolean; mac: string }) => (
  <>
    {portRow && (
      <SettingRow $h={46} $tone="sub">
        <RowLabel $sub>Port ID</RowLabel>
        <RowValue $inset><Field $w={219} $line={brown} $color="#fff">41</Field></RowValue>
      </SettingRow>
    )}
    <SettingRow $h={heights[0]} $tone="sub">
      <RowLabel $sub>Adapter Type</RowLabel>
      <RowValue $inset>
        <Field $w={193} $line={locked ? dim : bright} $color={locked ? '#65727a' : '#a5b4bd'}>E1000E<Chevron /></Field>
      </RowValue>
    </SettingRow>
    <SettingRow $h={heights[1]} $tone="sub">
      <RowLabel $sub>Shares</RowLabel>
      <RowValue $inset>
        <Field $w={95} $line={bright} $color="#a5b4bd">Normal<Chevron /></Field>
        <Field $w={264} $ml={20} $line={faint} $color="#88939a">50<Chevron size={15} sw={1.8} /></Field>
      </RowValue>
    </SettingRow>
    <SettingRow $h={heights[2]} $tone="sub">
      <RowLabel $sub>Reservation</RowLabel>
      <RowValue $inset>
        <Field $w={264} $line={brown} $color="#fff">0<Chevron size={15} sw={1.8} /></Field>
        <MbitSelect />
      </RowValue>
    </SettingRow>
    <SettingRow $h={heights[3]} $tone="sub">
      <RowLabel $sub>Limit</RowLabel>
      <RowValue $inset>
        <Field $w={264} $line={brown} $color="#fff">Unlimited<Chevron size={15} sw={1.8} /></Field>
        <MbitSelect />
      </RowValue>
    </SettingRow>
    <SettingRow $h={heights[4]} $tone="sub">
      <RowLabel $sub>MAC Address</RowLabel>
      <RowValue $inset>
        <Field $w={207} $line={faint} $color="#88939a">{mac}</Field>
        <Field $w={116} $ml={20} $line={locked ? dim : bright} $color={locked ? '#65727a' : '#a5b4bd'}>Automatic<Chevron /></Field>
      </RowValue>
    </SettingRow>
  </>
);

const EditSettings = () => (
  <Modal>
    <ModalHead>
      <ModalTitle>Edit Settings</ModalTitle>
      <ModalSub>ocplab-dc1</ModalSub>
      <Spacer />
      <Glyph w={18} h={20} sw={1.5} stroke="#fff"><path d="M1 3 17 19M17 3 1 19" /></Glyph>
    </ModalHead>
    <ModalBody>
      <SettingsTable>
        <SettingRow $h={54} $tone="sub">
          <RowLabel $sub>Status</RowLabel>
          <RowValue $inset><EmptyBox /><PlainValue>Connect At Power On</PlainValue></RowValue>
        </SettingRow>
        <NetworkRows portRow locked heights={[47, 46, 46, 46, 47]} mac="00:50:56:9f:64:75" />
        <SettingRow $h={52} $tone="light">
          <RowLabel><RowCaret $drop={8} $dark><Chevron size={14} sw={1.6} /></RowCaret>New Network<Star>*</Star></RowLabel>
          <RowValue>
            <NetworkSelect><Clip>DataSvc Dev VM Network PG (VLAN 106)</Clip><Chevron size={11} sw={1.4} /></NetworkSelect>
            <Checked><Glyph w={13} stroke="#fff" sw={2.2}><path d="M2.500 7 5.200 9.800 10.500 2.500" /></Glyph></Checked>
            <ConnectedLabel>Connected</ConnectedLabel>
            <Glyph w={23} sw={1.4} stroke="#111"><circle cx="11.500" cy="11.500" r="10.300" /><path d="M7.200 7.200 15.800 15.800M15.800 7.200 7.200 15.800" /></Glyph>
          </RowValue>
        </SettingRow>
        <SettingRow $h={54} $tone="sub">
          <RowLabel $sub>Status</RowLabel>
        </SettingRow>
        <NetworkRows heights={[46, 46, 47, 46, 46]} mac="" />
        <SettingRow $h={53}>
          <RowLabel><RowCaret $drop={8}><Chevron dir="right" size={14} sw={1.6} /></RowCaret>USB xHCI controller</RowLabel>
          <RowValue><PlainValue>USB 3.1</PlainValue></RowValue>
        </SettingRow>
        <SettingRow $h={46}>
          <RowLabel><RowCaret><Chevron dir="right" size={14} sw={1.6} /></RowCaret>Video card</RowLabel>
          <RowValue><Field $w={221} $line={dim} $color="#65757f">Specify custom settings<Chevron /></Field></RowValue>
        </SettingRow>
        <SettingRow $h={46}>
          <RowLabel><RowCaret><Chevron dir="right" size={14} sw={1.6} /></RowCaret>Security Devices</RowLabel>
          <RowValue><PlainValue>Not Configured</PlainValue></RowValue>
        </SettingRow>
        <SettingRow $h={46}>
          <RowLabel><RowCaret />VMCI device</RowLabel>
        </SettingRow>
      </SettingsTable>
      <ModalScroll><ModalThumb /></ModalScroll>
    </ModalBody>
    <ModalFoot>
      <Action $w={105}>CANCEL</Action>
      <Action $w={90} $primary>OK</Action>
    </ModalFoot>
    <Dropdown>
      <Option $on>DataSvc Dev VM Network PG (VLAN 106)</Option>
      <Option>DataSvc PG OCP VM Network (VLAN 111)</Option>
      <Option>Browse ...</Option>
    </Dropdown>
  </Modal>
);

/* ---------------------------------------------------- guest task bar (bottom) */

const GuestBar = styled.footer`
  height: 40px;
  flex: none;
  display: flex;
  align-items: center;
  background: linear-gradient(90deg, #001a25 0%, #001824 40%, #000a18 80%, #000716 100%);
  color: #fff;
`;

const SearchBox = styled.div`
  width: 344px;
  height: 40px;
  padding-left: 11px;
  display: flex;
  align-items: center;
  gap: 12px;
  border: 1px solid #b8b8b8;
  background: #f2f2f2;
  color: #222;
  font-size: 15px;
  letter-spacing: -0.57px;
`;

const GuestApp = styled.div<{ $active?: boolean; $running?: boolean }>`
  width: ${p => (p.$running ? 40 : 48)}px;
  height: 40px;
  margin: 0 ${p => (p.$running ? 4 : 0)}px;
  padding-top: 2px;
  display: flex;
  align-items: center;
  justify-content: center;
  border-bottom: 2px solid ${p => (p.$active || p.$running ? '#76b9ed' : 'transparent')};
  background: ${p => (p.$active ? '#384655' : 'none')};
`;

const GuestClock = styled.div`
  width: 76px;
  text-align: center;
  line-height: 18px;
  font-size: 12px;
  letter-spacing: -0.45px;
`;

const ShowDesktop = styled.div`
  width: 4px;
  height: 40px;
  border-left: 1px solid #5c6470;
`;

const GuestTaskbar = () => (
  <GuestBar>
    <Slot $w={48}><WindowsLogo size={16} /></Slot>
    <SearchBox><Lens size={17} color="#222" />Type here to search</SearchBox>
    <Slot $w={51}><TaskView size={17} /><Slot $w={3} /></Slot>
    <GuestApp $active><EdgeLogo size={25} /></GuestApp>
    <Slot $w={1} />
    <GuestApp><FolderLogo size={23} /></GuestApp>
    <Slot $w={1} />
    <GuestApp>
      <Glyph w={24} h={18} stroke="none"><path fill="#f0e3a0" d="M0 8 14 0 24 3 10 12Z" /><path fill="#c9b35c" d="M0 8 10 12V18L0 13Z" /><path fill="#8f7a2e" d="M10 12 24 3V8L10 18Z" /><path fill="#fff" d="M6 8 14 3.500 18 5 10 9.500Z" /></Glyph>
    </GuestApp>
    <Slot $w={1} />
    <GuestApp $running>
      <Glyph w={20} h={25} stroke="none"><circle cx="10" cy="4.500" r="4" fill="#1f78d6" /><path fill="#4fc24a" d="M8 2 12 3 11 6 8 5Z" /><path fill="#c9cdd0" d="M7.500 10H12.500V14H7.500ZM5 14.500H15V19H5ZM1.500 19.500H18.500V24.500H1.500Z" /><path stroke="#6a6f73" strokeWidth=".8" d="M10 14.500V19M7 19.500V24.500M13 19.500V24.500" /></Glyph>
    </GuestApp>
    <Slot $w={1} />
    <GuestApp>
      <Glyph w={24} stroke="#ddd" sw={1}><rect x="11" y="1" width="10" height="9" fill="#1414c8" /><path fill="#c8c8c8" d="M9 11H23V13.500H9Z" /><rect x="3" y="10.500" width="10" height="9" fill="#1414c8" /><path fill="#c8c8c8" d="M1 20.500H15V23H1Z" /><path fill="#ffe600" stroke="none" d="M16 5 8 13H12L7 19 17 11H12.500Z" /></Glyph>
    </GuestApp>
    <Spacer />
    <Slot $w={24}><Chevron dir="up" size={13} sw={1.3} /></Slot>
    <Slot $w={24}><Glyph w={17} sw={1.3} stroke="#fff"><path d="M1 2.500H15.500V14.500H1ZM5 9C5 6 10 5 11 7.500M11 5V7.500H8.500M7 11H5" /><circle cx="13" cy="13" r="3.600" fill="#e81123" stroke="none" /></Glyph></Slot>
    <Slot $w={24}><Glyph w={17} sw={1.2} stroke="#fff"><path d="M5 3.500H16V11.500H5ZM10.500 11.500V15M7 15H14M.6 1.500H5.500V5.500H.6ZM3 5.500V9H5" /></Glyph></Slot>
    <Slot $w={22}><Glyph w={17} sw={1.2} stroke="#fff"><path d="M1 6H4L8 2.500V14L4 10.500H1Z" /><circle cx="12" cy="12" r="4.500" fill="#e81123" stroke="none" /><path d="M10.300 10.300 13.700 13.700M13.700 10.300 10.300 13.700" /></Glyph></Slot>
    <Slot $w={8} />
    <Slot $w={20}><PenIcon size={17} /></Slot>
    <GuestClock>1:30 PM<br />7/10/2022</GuestClock>
    <Slot $w={28}>
      <Glyph w={16} h={17} sw={1.3} stroke="#fff"><path d="M.8 1H15.200V12.500H11L8 15.500 5 12.500H.8Z" /></Glyph>
    </Slot>
    <Slot $w={15} />
    <ShowDesktop />
  </GuestBar>
);

export default function App() {
  return (
    <Screen>
      <GlobalStyle />
      <HostTaskbar />
      <RdTabsChrome />
      <EdgeChrome />
      <Viewport>
        <VsphereClient />
        <PageScroll />
        <EditSettings />
      </Viewport>
      <GuestTaskbar />
    </Screen>
  );
}
